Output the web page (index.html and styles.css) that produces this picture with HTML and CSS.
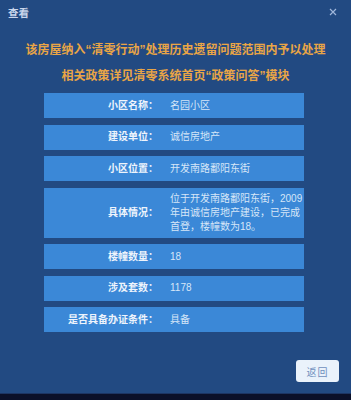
FILE: index.html
```html
<!DOCTYPE html>
<html lang="zh-CN">
<head>
<meta charset="utf-8">
<title>查看</title>
<link rel="stylesheet" href="styles.css">
</head>
<body>
<div class="dialog">
  <div class="titlebar">
    <span class="title">查看</span>
    <span class="close" aria-label="关闭">
      <svg width="8" height="8" viewBox="0 0 8 8"><path d="M1 1L7 7M7 1L1 7" stroke="#9fb6da" stroke-width="1.2" fill="none"/></svg>
    </span>
  </div>
  <div class="notice">
    <p>该房屋纳入“清零行动”处理历史遗留问题范围内予以处理</p>
    <p>相关政策详见清零系统首页“政策问答”模块</p>
  </div>
  <div class="rows">
    <div class="row"><div class="label">小区名称：</div><div class="value">名园小区</div></div>
    <div class="row"><div class="label">建设单位：</div><div class="value">诚信房地产</div></div>
    <div class="row"><div class="label">小区位置：</div><div class="value">开发南路鄱阳东街</div></div>
    <div class="row tall"><div class="label">具体情况：</div><div class="value">位于开发南路鄱阳东街，2009年由诚信房地产建设，已完成首登，楼幢数为18。</div></div>
    <div class="row"><div class="label">楼幢数量：</div><div class="value">18</div></div>
    <div class="row"><div class="label">涉及套数：</div><div class="value">1178</div></div>
    <div class="row"><div class="label">是否具备办证条件：</div><div class="value">具备</div></div>
  </div>
  <div class="actions">
    <button class="btn">返回</button>
  </div>
</div>
<div class="footer"></div>
</body>
</html>
```
FILE: styles.css
```css
html, body {
  margin: 0;
  padding: 0;
  background: #0b1029;
}
body {
  width: 351px;
  height: 400px;
  overflow: hidden;
  font-family: "Liberation Sans", "Noto Sans CJK SC", sans-serif;
}
.dialog {
  height: 393px;
  background: #224a82;
  display: flex;
  flex-direction: column;
}
.titlebar {
  height: 26px;
  display: flex;
  align-items: center;
  justify-content: space-between;
  padding: 0 14px 2px 8px;
  box-sizing: border-box;
}
.title {
  font-size: 10.5px;
  font-weight: bold;
  color: #c9d6ec;
}
.close {
  display: flex;
  align-items: center;
}
.notice {
  margin-top: 11px;
  text-align: center;
  color: #e9a546;
  font-weight: bold;
  font-size: 12px;
  line-height: 26px;
}
.notice p {
  margin: 0;
}
.rows {
  margin: 4px 47px 0 44px;
  display: flex;
  flex-direction: column;
  gap: 6.5px;
}
.row {
  min-height: 25px;
  background: #3b88d7;
  display: flex;
  align-items: center;
  gap: 12px;
  font-size: 10px;
  line-height: 14px;
}
.label {
  width: 114px;
  flex: none;
  text-align: right;
  color: #eef4fc;
  font-weight: bold;
}
.value {
  flex: 1;
  color: #d6e6f8;
  padding: 4px 0;
}
.actions {
  margin-top: 28px;
  display: flex;
  justify-content: flex-end;
  padding-right: 12px;
}
.btn {
  width: 43px;
  height: 22px;
  border: none;
  border-radius: 3px;
  background: #eaf2fb;
  color: #6f8fbd;
  font-family: inherit;
  font-size: 10px;
  padding: 0;
  letter-spacing: 1px;
}
.footer {
  height: 7px;
  background: #0b1029;
  border-top: 1px solid #1d3563;
  box-sizing: border-box;
}
```
